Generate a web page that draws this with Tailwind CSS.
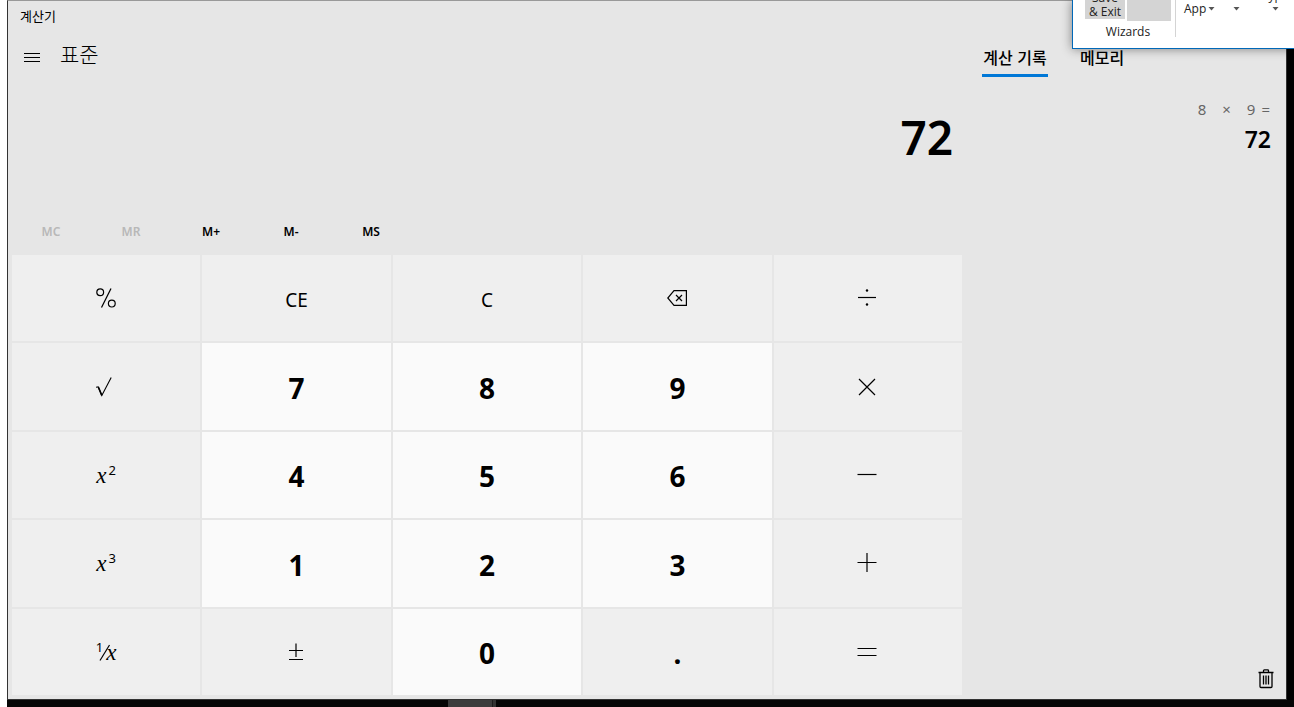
<!DOCTYPE html>
<html lang="ko">
<head>
<meta charset="utf-8">
<meta name="viewport" content="width=device-width, initial-scale=1">
<title>계산기</title>
<script src="https://cdn.jsdelivr.net/npm/@tailwindcss/browser@4"></script>
</head>
<body class="relative flex h-screen flex-col overflow-hidden bg-white pl-[7px] font-['Noto_Sans','Noto_Sans_CJK_KR',sans-serif] text-black">
  <div class="flex min-h-0 flex-1 bg-black pr-[7px]">
    <div class="flex min-w-0 flex-1 flex-col border border-[#333] border-t-[#999] bg-[#e6e6e6]">
      <div class="flex min-h-0 flex-1">
        <main class="flex min-w-0 flex-1 flex-col">
          <div class="flex h-8 items-center px-3 pb-[2px] text-[13px] font-['Noto_Sans_CJK_KR',sans-serif]">계산기</div>
          <header class="flex h-12 items-center gap-4 px-3">
            <button aria-label="메뉴" class="flex size-6 items-center justify-center pt-px">
              <svg width="16" height="10" viewBox="0 0 16 10" stroke="#000" shape-rendering="crispEdges"><path d="M0 .5h16M0 4.5h16M0 8.5h16"/></svg>
            </button>
            <h1 class="pb-2 text-[21px] leading-6 font-light font-['Noto_Sans_CJK_KR',sans-serif]">표준</h1>
          </header>
          <div class="flex h-[130px] items-start justify-end pt-6 pr-[13px] text-[46px] leading-[64px] font-semibold"><output>72</output></div>
          <div class="flex h-[43px] px-[3px] pb-[2px] text-xs font-semibold">
            <button disabled class="w-20 text-[#b8b8b8]">MC</button>
            <button disabled class="w-20 text-[#b8b8b8]">MR</button>
            <button class="w-20">M+</button>
            <button class="w-20">M-</button>
            <button class="w-20">MS</button>
          </div>
          <div class="grid min-h-0 flex-1 grid-cols-5 grid-rows-5 gap-[2px] px-1 pt-px pb-1 text-[28px] font-bold">
            <button aria-label="퍼센트" class="flex items-center justify-center bg-[#efefef]">
              <svg width="20" height="20" viewBox="0 0 20 20" fill="none" stroke="#000" stroke-width="1.2"><circle cx="4.2" cy="4.2" r="3.4"/><circle cx="15.8" cy="15.6" r="3.4"/><path d="M15 .6 5.5 19.4"/></svg>
            </button>
            <button class="flex items-center justify-center bg-[#efefef] pt-1 text-[19px] font-normal">CE</button>
            <button class="flex items-center justify-center bg-[#efefef] pt-1 text-[19px] font-normal">C</button>
            <button aria-label="백스페이스" class="flex items-center justify-center bg-[#efefef]">
              <svg width="20" height="16" viewBox="0 0 20 16" fill="none" stroke="#000" stroke-width="1.2"><path d="M7 .6h12.4v14.8H7L.8 8zM9 5l6 6M15 5l-6 6"/></svg>
            </button>
            <button aria-label="나누기" class="flex items-center justify-center bg-[#efefef] pr-[2px]">
              <svg width="20" height="20" viewBox="0 0 20 20"><path d="M1 9.5h18" stroke="#000" stroke-width="1.2"/><circle cx="10" cy="2.5" r="1.2"/><circle cx="10" cy="16.5" r="1.2"/></svg>
            </button>

            <button aria-label="제곱근" class="flex items-center justify-center bg-[#efefef] pr-1">
              <svg width="16" height="20" viewBox="0 0 16 20" fill="none" stroke="#000" stroke-width="1.1"><path d="M0 10.2 2.2 9.8 5.8 18.4 15.2.4"/><path d="m2.3 10 3.5 8.4" stroke-width="1.6"/></svg>
            </button>
            <button class="flex items-center justify-center bg-[#fafafa] pt-[3px]">7</button>
            <button class="flex items-center justify-center bg-[#fafafa] pt-[3px]">8</button>
            <button class="flex items-center justify-center bg-[#fafafa] pt-[3px]">9</button>
            <button aria-label="곱하기" class="flex items-center justify-center bg-[#efefef] pr-[2px]">
              <svg width="18" height="18" viewBox="0 0 18 18" stroke="#000" stroke-width="1.2"><path d="m1 1 16 16M17 1 1 17"/></svg>
            </button>

            <button class="flex items-center justify-center gap-[2px] bg-[#efefef] pt-[2px] font-normal"><span class="font-['Liberation_Serif',serif] text-[23px] leading-7 italic">x</span><span class="pb-3 text-[13px] leading-4">2</span></button>
            <button class="flex items-center justify-center bg-[#fafafa] pt-[3px]">4</button>
            <button class="flex items-center justify-center bg-[#fafafa] pt-[3px]">5</button>
            <button class="flex items-center justify-center bg-[#fafafa] pt-[3px]">6</button>
            <button aria-label="빼기" class="flex items-center justify-center bg-[#efefef] pr-[2px]">
              <svg width="20" height="20" viewBox="0 0 20 20" stroke="#000" stroke-width="1.2"><path d="M.5 9.5h19"/></svg>
            </button>

            <button class="flex items-center justify-center gap-[2px] bg-[#efefef] pt-[2px] font-normal"><span class="font-['Liberation_Serif',serif] text-[23px] leading-7 italic">x</span><span class="pb-3 text-[13px] leading-4">3</span></button>
            <button class="flex items-center justify-center bg-[#fafafa] pt-[3px]">1</button>
            <button class="flex items-center justify-center bg-[#fafafa] pt-[3px]">2</button>
            <button class="flex items-center justify-center bg-[#fafafa] pt-[3px]">3</button>
            <button aria-label="더하기" class="flex items-center justify-center bg-[#efefef] pr-[2px]">
              <svg width="20" height="20" viewBox="0 0 20 20" stroke="#000" stroke-width="1.2"><path d="M.5 9.5h19M10 0v19"/></svg>
            </button>

            <button class="flex items-center justify-center bg-[#efefef] pt-[2px] font-normal"><span class="pb-3 text-[13px] leading-4">1</span><svg class="-mx-1" width="11" height="18" viewBox="0 0 11 18" stroke="#000" stroke-width="1.2"><path d="M10.500 1 1 16.500"/></svg><span class="font-['Liberation_Serif',serif] text-[23px] leading-7 italic">x</span></button>
            <button aria-label="양수 음수" class="flex items-center justify-center bg-[#efefef] pr-[2px]">
              <svg width="16" height="18" viewBox="0 0 16 18" stroke="#000" stroke-width="1.2"><path d="M1 7.500h14M8 .5v13.500M1 16.500h14"/></svg>
            </button>
            <button class="flex items-center justify-center bg-[#fafafa] pt-[3px]">0</button>
            <button class="flex items-center justify-center bg-[#efefef] pt-[3px]">.</button>
            <button aria-label="같음" class="flex items-center justify-center bg-[#efefef] pr-[2px]">
              <svg width="20" height="20" viewBox="0 0 20 20" stroke="#000" stroke-width="1.2"><path d="M.5 6.500h19M.5 13.500h19"/></svg>
            </button>
          </div>
        </main>

        <aside class="flex w-80 shrink-0 flex-col pt-10 pl-4">
          <div role="tablist" class="flex gap-8 font-['Noto_Sans_CJK_KR',sans-serif] text-[16px] font-medium">
            <button role="tab" aria-selected="true" class="h-9 min-w-[66px] border-b-3 border-[#0078d7] leading-[33px]">계산 기록</button>
            <button role="tab" aria-selected="false" class="h-9 border-b-3 border-transparent leading-[33px]">메모리</button>
          </div>
          <div class="flex flex-1 flex-col items-end pt-5 pr-[15px]">
            <div class="flex pr-px text-[15px] leading-6 text-[#666]"><span>8</span><span class="px-4">×</span><span>9</span><span class="pl-[6px]">=</span></div>
            <div class="text-[23px] leading-9 font-semibold">72</div>
          </div>
          <div class="flex justify-end pr-3 pb-[10px]">
            <button aria-label="기록 지우기">
              <svg width="16" height="20" viewBox="0 0 16 20" fill="none" stroke="#000" stroke-width="1.3"><path d="M.5 3.500h15M5.500 3.500V1.700q0-.8.8-.8h3.400q.8 0 .8.800v1.800M2 3.500v14q0 1 1 1h10q1 0 1-1v-14M5.500 6.500v9M8 6.500v9M10.500 6.500v9"/></svg>
            </button>
          </div>
        </aside>
      </div>
    </div>
  </div>
  <div class="flex h-[7px] shrink-0 bg-[#060606] pl-[441px]"><div class="w-11 bg-[#3c3c3c]"></div><div class="w-1 border-l border-[#1c1c1c] bg-[#333]"></div></div>

  <!-- Corner of the ribbon window lying over the calculator -->
  <section class="absolute top-0 right-0 flex h-[49px] w-[222px] border-b border-l border-[#0068b8] bg-white font-['Open_Sans',sans-serif] text-xs text-[#222] shadow-[0_0_10px_rgba(0,0,0,0.45)]">
    <div class="flex h-full w-full overflow-hidden">
      <div class="flex w-[102px] shrink-0 flex-col pl-3">
        <div class="flex h-[21px] items-end gap-[2px]">
          <button class="mb-[2px] flex h-7 w-10 flex-col items-center justify-end bg-[#d4d4d4] leading-[14px]"><span>Save</span><span class="whitespace-nowrap">&amp; Exit</span></button>
          <div class="h-6 w-11 bg-[#d4d4d4]"></div>
        </div>
        <div class="w-[86px] pt-[3px] text-center leading-4">Wizards</div>
      </div>
      <div class="h-[37px] w-px shrink-0 bg-[#d4d4d4]"></div>
      <div class="flex items-start pl-2">
        <button class="flex items-center gap-[2px] leading-[18px]">App<svg width="7" height="4" viewBox="0 0 7 4"><path d="M.5 0h6l-3 3.500z" fill="#555"/></svg></button>
        <button aria-label="옵션" class="flex h-[18px] w-[42px] items-center justify-center"><svg width="7" height="4" viewBox="0 0 7 4"><path d="M.5 0h6l-3 3.500z" fill="#555"/></svg></button>
        <button class="-mt-3 flex w-9 flex-col items-center leading-4">Type<svg class="mt-[3px]" width="7" height="4" viewBox="0 0 7 4"><path d="M.5 0h6l-3 3.500z" fill="#555"/></svg></button>
      </div>
    </div>
  </section>
</body>
</html>
